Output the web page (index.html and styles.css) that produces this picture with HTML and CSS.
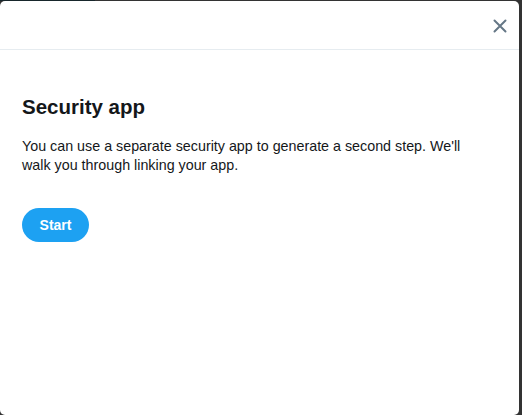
FILE: index.html
```html
<!DOCTYPE html>
<html>
<head>
<meta charset="utf-8">
<link rel="stylesheet" href="styles.css">
</head>
<body>
<div class="topline"><span class="topline-accent"></span></div>
<div class="frame">
  <div class="modal">
    <div class="modal-header">
      <button class="close" aria-label="Close">
        <svg width="14" height="14" viewBox="0 0 14 14"><path d="M1.5 1.5 L12.5 12.5 M12.5 1.5 L1.5 12.5" stroke="#657786" stroke-width="2" stroke-linecap="round"/></svg>
      </button>
    </div>
    <div class="modal-body">
      <h1 class="title">Security app</h1>
      <p class="desc">You can use a separate security app to generate a second step. We'll walk you through linking your app.</p>
      <button class="start">Start</button>
    </div>
  </div>
  <div class="edge"></div>
</div>
</body>
</html>
```
FILE: styles.css
```css
html, body {
  margin: 0;
  padding: 0;
  width: 522px;
  height: 415px;
  background: #333333;
  overflow: hidden;
  font-family: "Liberation Sans", Arial, sans-serif;
}
.topline {
  height: 1px;
  display: flex;
}
.topline-accent {
  width: 95px;
  background: #17262b;
}
.frame {
  display: flex;
  height: 414px;
}
.modal {
  width: 519px;
  height: 414px;
  background: #ffffff;
  border-radius: 5px;
  display: flex;
  flex-direction: column;
}
.edge {
  flex: 1;
}
.modal-header {
  height: 48px;
  border-bottom: 1px solid #e6ecf0;
  display: flex;
  justify-content: flex-end;
  align-items: center;
  padding-right: 12px;
}
.close {
  border: 0;
  background: none;
  padding: 0;
  width: 14px;
  height: 14px;
  display: flex;
  margin-top: 2px;
}
.modal-body {
  padding: 44px 22px 0;
}
.title {
  margin: 0;
  font-size: 20.5px;
  font-weight: bold;
  color: #14171a;
  line-height: 26px;
}
.desc {
  margin: 17px 0 0;
  font-size: 14.3px;
  line-height: 18.5px;
  color: #14171a;
  width: 460px;
}
.start {
  margin-top: 34px;
  height: 34px;
  width: 67px;
  border: 0;
  border-radius: 17px;
  background: #1da1f2;
  color: #ffffff;
  font-family: "Liberation Sans", Arial, sans-serif;
  font-weight: bold;
  font-size: 14px;
  padding: 0;
  display: block;
}
```
